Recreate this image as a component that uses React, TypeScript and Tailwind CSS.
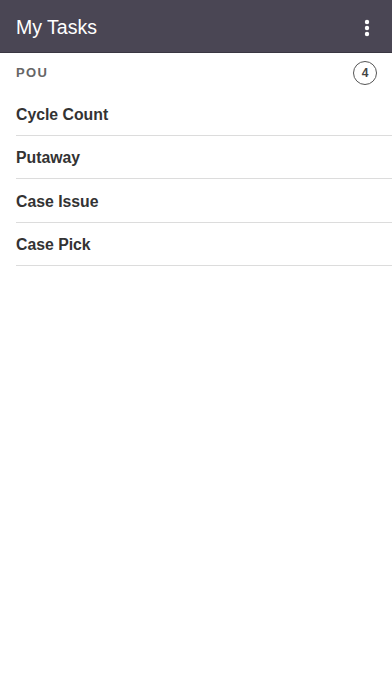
const tasks = ['Cycle Count', 'Putaway', 'Case Issue', 'Case Pick']

function MoreIcon() {
  return (
    <svg width="6" height="18" viewBox="0 0 6 18" className="fill-white">
      <circle cx="3" cy="3" r="2.2" />
      <circle cx="3" cy="9" r="2.2" />
      <circle cx="3" cy="15" r="2.2" />
    </svg>
  )
}

export default function App() {
  return (
    <div className="h-[696px] w-full bg-white font-['Liberation_Sans',Arial,sans-serif]">
      <header className="flex h-[53px] items-center justify-between border-b border-[#3a3742] bg-[#4a4654] pl-4 pr-[22px] pt-[3px]">
        <h1 className="text-[19.5px] text-white">My Tasks</h1>
        <MoreIcon />
      </header>
      <div className="flex h-[39px] items-center justify-between pl-4 pr-[15px]">
        <span className="text-[13px] font-bold tracking-[0.1em] text-[#666]">POU</span>
        <span className="grid h-6 w-6 place-items-center rounded-full border-[1.5px] border-[#555] text-[12px] font-bold text-[#444]">
          4
        </span>
      </div>
      <ul className="pl-4">
        {tasks.map((t) => (
          <li key={t} className="flex h-[43.5px] items-center border-b border-[#dcdcdc] pt-[3px] text-[15.8px] font-bold text-[#333]">
            {t}
          </li>
        ))}
      </ul>
    </div>
  )
}
